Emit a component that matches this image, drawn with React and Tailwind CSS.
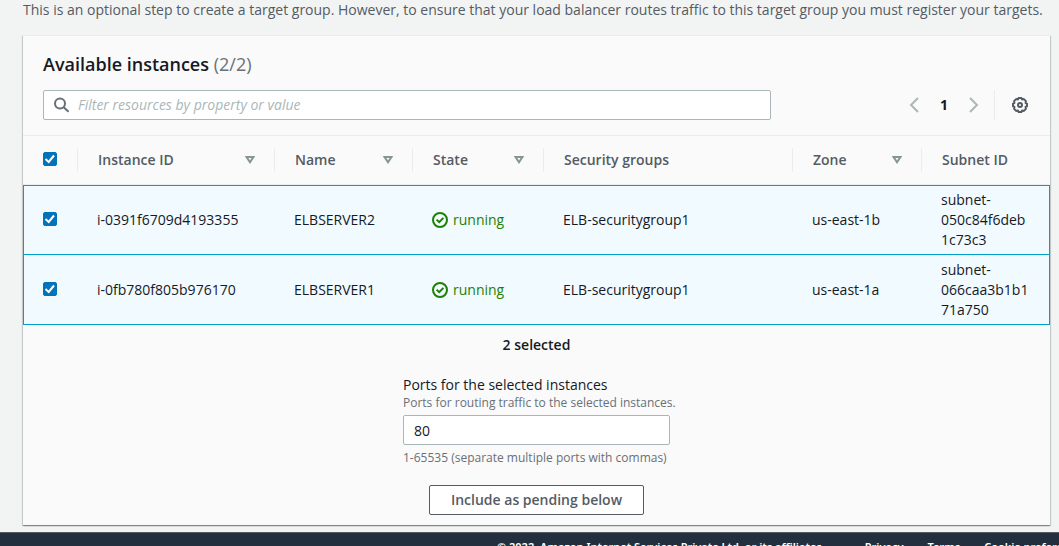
import { useState } from "react";

const instances = [
  { id: "i-0391f6709d4193355", name: "ELBSERVER2", group: "ELB-securitygroup1", zone: "us-east-1b", subnet: "subnet-050c84f6deb1c73c3" },
  { id: "i-0fb780f805b976170", name: "ELBSERVER1", group: "ELB-securitygroup1", zone: "us-east-1a", subnet: "subnet-066caa3b1b171a750" },
];

const columns = [
  { label: "Instance ID", sortable: true },
  { label: "Name", sortable: true },
  { label: "State", sortable: true },
  { label: "Security groups", sortable: false },
  { label: "Zone", sortable: true },
  { label: "Subnet ID", sortable: false },
];

function Checkbox({ label, checked, onChange }) {
  return (
    <span className="grid size-4">
      <input
        type="checkbox"
        aria-label={label}
        checked={checked}
        onChange={onChange}
        className="col-start-1 row-start-1 size-[14px] appearance-none rounded-xs border border-[#879596] bg-white checked:border-[#0073bb] checked:bg-[#0073bb]"
      />
      {checked && (
        <svg viewBox="0 0 14 14" className="pointer-events-none col-start-1 row-start-1 size-[14px]" fill="none" stroke="#fff" strokeWidth="2" aria-hidden="true">
          <path d="M2.5 7 L5.7 10 L11 3.5" />
        </svg>
      )}
    </span>
  );
}

function SortIcon() {
  return (
    <svg viewBox="0 0 10 8" className="h-2 w-[10px]" fill="none" stroke="#879596" strokeWidth="2" aria-hidden="true">
      <path d="M1.6 1 H8.4 L5 6.2 Z" />
    </svg>
  );
}

function SearchIcon() {
  return (
    <svg viewBox="0 0 16 16" className="size-4 shrink-0" fill="none" stroke="#687078" strokeWidth="2" aria-hidden="true">
      <circle cx="6" cy="6.5" r="5" />
      <path d="M9.7 10.2 L14.6 14.8" />
    </svg>
  );
}

function ChevronIcon({ d }) {
  return (
    <svg viewBox="0 0 16 16" className="size-4" fill="none" stroke="#aab7b8" strokeWidth="2" aria-hidden="true">
      <path d={d} />
    </svg>
  );
}

function GearIcon() {
  return (
    <svg viewBox="0 0 16 16" className="size-4" fill="none" stroke="#545b64" strokeWidth="2" strokeLinejoin="round" aria-hidden="true">
      <path d="M6.6 1 H9.4 L10 2.4 L11.9 2.1 L13.9 4.1 L13.6 6 L15 6.6 V9.4 L13.6 10 L13.9 11.9 L11.9 13.9 L10 13.6 L9.4 15 H6.6 L6 13.6 L4.1 13.9 L2.1 11.9 L2.4 10 L1 9.4 V6.6 L2.4 6 L2.1 4.1 L4.1 2.1 L6 2.4 Z" />
      <circle cx="8" cy="8" r="2" />
    </svg>
  );
}

function RunningIcon() {
  return (
    <svg viewBox="0 0 16 16" className="size-4" fill="none" stroke="#1d8102" strokeWidth="2" aria-hidden="true">
      <circle cx="8" cy="8" r="7" />
      <path d="M4.6 7.6 L7.2 10.2 L11.4 5.9" />
    </svg>
  );
}

export default function App() {
  const [selected, setSelected] = useState([true, true]);
  const count = selected.filter(Boolean).length;
  const all = count === instances.length;

  return (
    <div className="flex h-screen flex-col overflow-hidden bg-[#f2f3f3] font-['Open_Sans',sans-serif] text-sm leading-5 text-[#16191f]">
      <main className="shrink-0 pr-[9px] pb-[7px] pl-[23px]">
        <p className="whitespace-nowrap text-[#545b64]">
          This is an optional step to create a target group. However, to ensure that your load balancer routes traffic to this target group you must register your targets.
        </p>

        <section className="mt-[15px] border-t border-[#eaeded] bg-[#fafafa] shadow-[0_1px_1px_0_rgba(0,28,36,0.3),1px_1px_1px_0_rgba(0,28,36,0.15),-1px_1px_1px_0_rgba(0,28,36,0.15)]">
          <header className="px-5 pt-[17px] pb-[15px]">
            <h2 className="text-lg leading-[22px] font-semibold">
              Available instances <span className="font-normal text-[#687078]">({count}/{instances.length})</span>
            </h2>
            <div className="mt-[15px] flex items-center justify-between">
              <label className="flex h-[30px] max-w-[728px] flex-1 items-center gap-2 rounded-xs border border-[#aab7b8] bg-white px-[10px]">
                <SearchIcon />
                <input
                  type="search"
                  aria-label="Filter resources"
                  placeholder="Filter resources by property or value"
                  className="min-w-0 flex-1 bg-transparent outline-none placeholder:text-[#aab7b8] placeholder:italic"
                />
              </label>
              <div className="flex items-center">
                <nav aria-label="Pages" className="flex items-center gap-[18px] pr-3">
                  <button type="button" aria-label="Previous page"><ChevronIcon d="M12 1 L5 8 L12 15" /></button>
                  <button type="button" aria-current="page" className="font-bold">1</button>
                  <button type="button" aria-label="Next page"><ChevronIcon d="M4 1 L11 8 L4 15" /></button>
                </nav>
                <div className="flex h-[30px] items-center border-l border-[#eaeded] pr-[2px] pl-[17px]">
                  <button type="button" aria-label="Preferences"><GearIcon /></button>
                </div>
              </div>
            </div>
          </header>

          <table className="w-full table-fixed border-separate border-spacing-0 border-t border-[#eaeded] text-left">
            <colgroup>
              <col className="w-[54px]" />
              <col className="w-[197px]" />
              <col className="w-[138px]" />
              <col className="w-[131px]" />
              <col />
              <col className="w-[129px]" />
              <col className="w-[129px]" />
            </colgroup>
            <thead>
              <tr>
                <th scope="col" className="border-b border-[#eaeded] pl-5">
                  <Checkbox label="Select all instances" checked={all} onChange={() => setSelected(instances.map(() => !all))} />
                </th>
                {columns.map((c) => (
                  <th key={c.label} scope="col" className="h-[49px] border-b border-[#eaeded] font-semibold text-[#545b64]">
                    <div className="flex h-6 items-center justify-between border-l border-[#eaeded] pr-[19px] pl-5">
                      {c.label}
                      {c.sortable && (
                        <button type="button" aria-label={"Sort by " + c.label}><SortIcon /></button>
                      )}
                    </div>
                  </th>
                ))}
              </tr>
            </thead>
            <tbody className="[&_td]:h-[70px] [&_td]:border-b [&_td]:border-[#00a1c9] [&_td]:bg-[#f1faff] [&_td]:py-1 [&_td]:pl-5 [&_td:first-child]:border-l [&_td:first-child]:pl-[19px] [&_td:last-child]:border-r [&_tr:first-child_td]:border-t">
              {instances.map((row, i) => (
                <tr key={row.id}>
                  <td>
                    <Checkbox
                      label={"Select " + row.id}
                      checked={selected[i]}
                      onChange={() => setSelected(selected.map((s, j) => (j === i ? !s : s)))}
                    />
                  </td>
                  <td>{row.id}</td>
                  <td>{row.name}</td>
                  <td>
                    <span className="flex items-center gap-[5px] text-[#1d8102]"><RunningIcon />running</span>
                  </td>
                  <td>{row.group}</td>
                  <td>{row.zone}</td>
                  <td className="pr-5 break-words">{row.subnet}</td>
                </tr>
              ))}
            </tbody>
          </table>

          <div className="flex flex-col items-center pt-[10px] pb-[10px]">
            <p className="font-semibold">{count} selected</p>
            <div className="mt-5 flex w-[267px] flex-col">
              <label htmlFor="ports">Ports for the selected instances</label>
              <span id="ports-description" className="text-xs leading-4 whitespace-nowrap text-[#687078]">Ports for routing traffic to the selected instances.</span>
              <input
                id="ports"
                type="text"
                defaultValue="80"
                aria-describedby="ports-description ports-hint"
                className="mt-1 h-[30px] rounded-xs border border-[#aab7b8] bg-white px-[10px] outline-none"
              />
              <span id="ports-hint" className="mt-[5px] text-xs leading-4 whitespace-nowrap text-[#687078]">1-65535 (separate multiple ports with commas)</span>
            </div>
            <button type="button" className="mt-[19px] h-[30px] rounded-xs border border-[#545b64] bg-white px-[21px] font-semibold text-[#545b64]">
              Include as pending below
            </button>
          </div>
        </section>
      </main>

      <footer className="flex shrink-0 gap-6 border-t border-[#545b64] bg-[#232f3e] pt-[6px] pb-2 pl-[497px] font-['Noto_Sans',sans-serif] text-[11px] leading-4 font-semibold whitespace-nowrap text-white">
        <span className="pr-4">© 2022, Amazon Internet Services Private Ltd. or its affiliates.</span>
        <a href="#privacy">Privacy</a>
        <a href="#terms">Terms</a>
        <a href="#cookies">Cookie preferences</a>
      </footer>
    </div>
  );
}
